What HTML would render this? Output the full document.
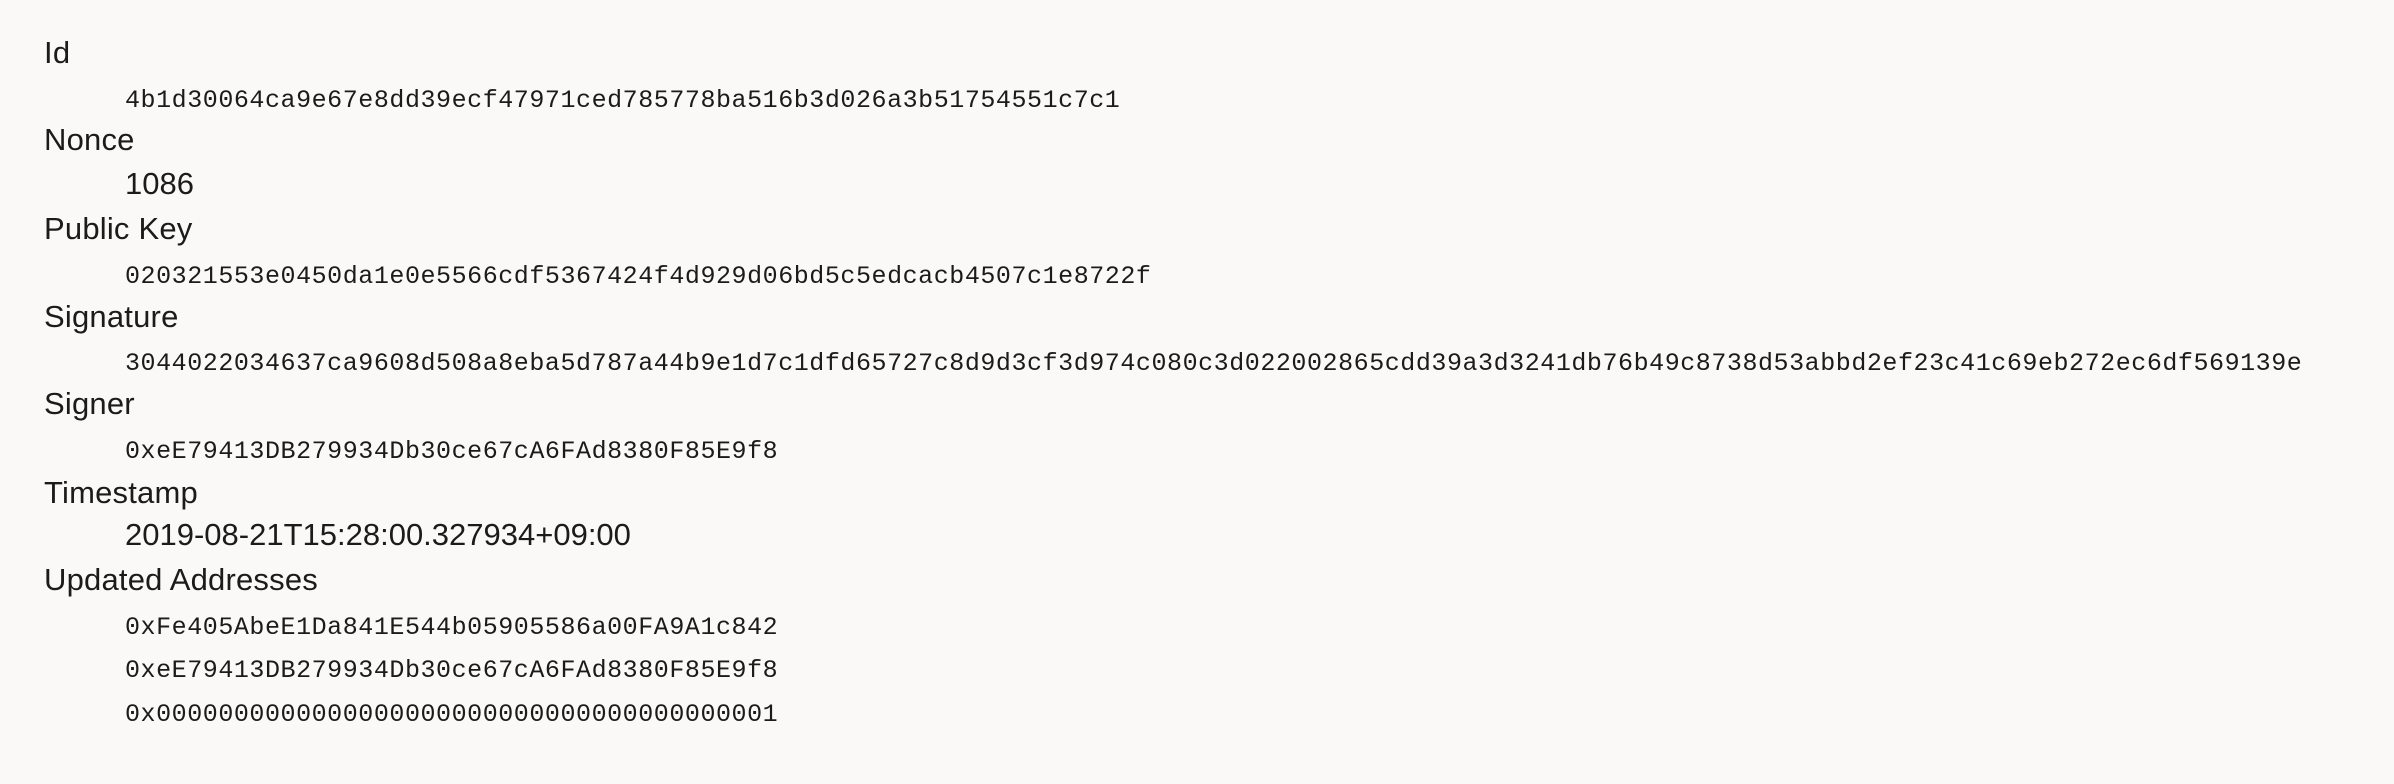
<!DOCTYPE html>
<html><head><meta charset="utf-8"><style>
html,body{margin:0;padding:0;background:#faf9f8;width:2394px;height:784px;overflow:hidden;color:#1b1b1b}
.l{position:absolute;height:44px;line-height:44px;white-space:nowrap}
.s{left:44px;font-family:"Liberation Sans",sans-serif;font-size:31px;letter-spacing:0.2px}
.m{left:125px;font-family:"Liberation Mono",monospace;font-size:25px;letter-spacing:0.55px}
.t{left:125px;font-family:"Liberation Sans",sans-serif;font-size:31px;letter-spacing:0}
</style></head><body>
<div class="l s" style="top:31px">Id</div>
<div class="l m" style="top:79px">4b1d30064ca9e67e8dd39ecf47971ced785778ba516b3d026a3b51754551c7c1</div>
<div class="l s" style="top:118px">Nonce</div>
<div class="l t" style="top:162px">1086</div>
<div class="l s" style="top:207px">Public Key</div>
<div class="l m" style="top:255px">020321553e0450da1e0e5566cdf5367424f4d929d06bd5c5edcacb4507c1e8722f</div>
<div class="l s" style="top:295px">Signature</div>
<div class="l m" style="top:342px">3044022034637ca9608d508a8eba5d787a44b9e1d7c1dfd65727c8d9d3cf3d974c080c3d022002865cdd39a3d3241db76b49c8738d53abbd2ef23c41c69eb272ec6df569139e</div>
<div class="l s" style="top:382px">Signer</div>
<div class="l m" style="top:430px">0xeE79413DB279934Db30ce67cA6FAd8380F85E9f8</div>
<div class="l s" style="top:471px">Timestamp</div>
<div class="l t" style="top:513px">2019-08-21T15:28:00.327934+09:00</div>
<div class="l s" style="top:558px">Updated Addresses</div>
<div class="l m" style="top:606px">0xFe405AbeE1Da841E544b05905586a00FA9A1c842</div>
<div class="l m" style="top:649px">0xeE79413DB279934Db30ce67cA6FAd8380F85E9f8</div>
<div class="l m" style="top:693px">0x0000000000000000000000000000000000000001</div>
</body></html>
